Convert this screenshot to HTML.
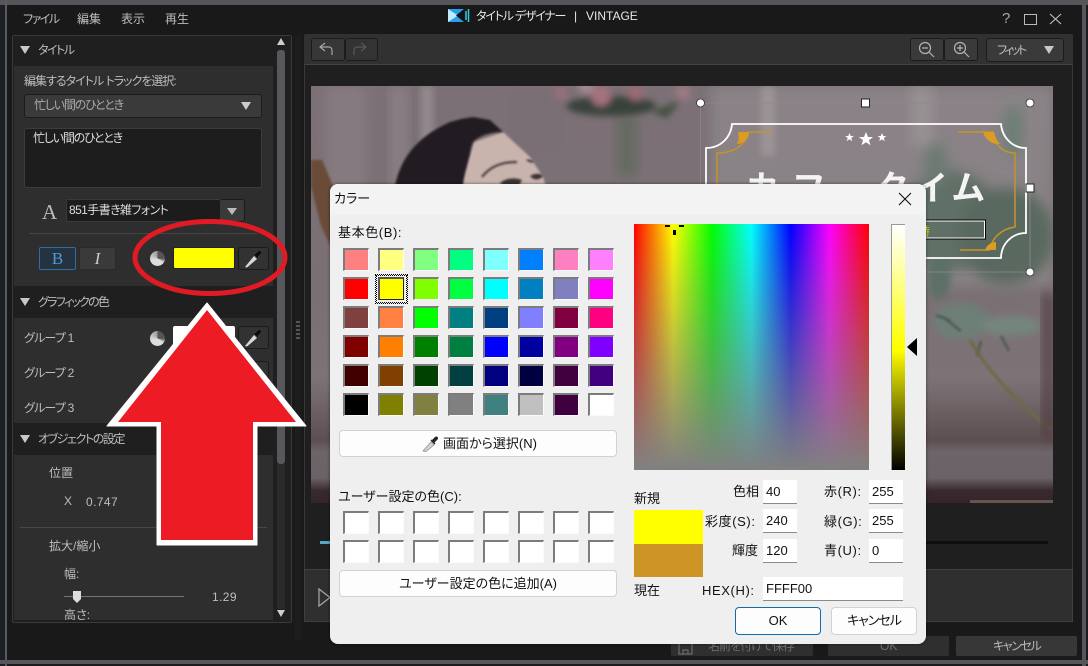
<!DOCTYPE html>
<html lang="ja"><head><meta charset="utf-8"><title>カラー</title>
<style>
*{box-sizing:border-box;margin:0;padding:0}
html,body{width:1088px;height:666px;overflow:hidden;background:#1b1b1d}
body{position:relative;font-family:"Liberation Sans","Noto Sans CJK JP",sans-serif;font-size:12px;color:#bdbdbd;font-feature-settings:"palt"}
.a{position:absolute}
.t{position:absolute;white-space:nowrap;line-height:16px}
.ct{position:absolute;left:14px;width:259px;background:#2e2e2e}
.tri{position:absolute;width:0;height:0;border-left:5px solid transparent;border-right:5px solid transparent;border-top:8px solid #c8c8c8}
.btn{position:absolute;background:#323232;border:1px solid #1b1b1b;border-radius:3px}
.d{position:absolute;color:#111;white-space:nowrap;line-height:16px;font-size:13px}
.sp{letter-spacing:.6px}
.sw{position:absolute;width:26px;height:23px;border-top:2px solid #7c7c7c;border-left:2px solid #7c7c7c;border-right:1px solid #fbfbfb;border-bottom:1px solid #fbfbfb}
.db{position:absolute;background:#fdfdfd;border:1px solid #d2d2d2;border-radius:4px;color:#111;font-size:13px;text-align:center;line-height:26px;white-space:nowrap}
.inp{position:absolute;background:#fff;border-bottom:1px solid #8a8a8a;color:#111;font-size:13px;line-height:23px;padding-left:3px;height:24px}
</style></head><body>
<!-- window frame -->
<div class="a" style="left:0;top:0;width:1088px;height:5px;background:#56565a"></div>
<div class="a" style="left:5px;top:0;width:2px;height:666px;background:#5a5a5e"></div>
<div class="a" style="left:0;top:5px;width:5px;height:661px;background:#1c2026"></div>
<div class="a" style="left:1082px;top:0;width:4px;height:666px;background:#56565a"></div>
<div class="a" style="left:0;top:660px;width:1088px;height:4px;background:#56565a"></div>
<div class="a" style="left:7px;top:5px;width:1075px;height:655px;background:#19191a"></div>

<!-- menu -->
<div class="t" style="left:23px;top:11px;letter-spacing:-1.500px">ファイル</div>
<div class="t" style="left:77px;top:11px">編集</div>
<div class="t" style="left:121px;top:11px">表示</div>
<div class="t" style="left:165px;top:11px">再生</div>

<!-- title -->
<svg class="a" style="left:447px;top:8px" width="26" height="16" viewBox="0 0 26 16"><rect x="1" y="1" width="16" height="13" fill="#2a9fe8"/><path d="M1 1L11 7.500 1 14z" fill="#bfeaff"/><path d="M17 1L9 7.500 17 14z" fill="#10131a"/><path d="M19 3v9M21.500 1v13" stroke="#35c8dc" stroke-width="1.500"/></svg>
<div class="t" style="left:476px;top:8px;color:#e8e8e8;letter-spacing:-1.200px">タイトル デザイナー</div>
<div class="t" style="left:574px;top:8px;color:#e8e8e8">|</div>
<div class="t" style="left:586px;top:8px;color:#e8e8e8">VINTAGE</div>
<div class="t" style="left:1002px;top:11px;font-size:15px;color:#aaa">?</div>
<div class="a" style="left:1024px;top:14px;width:13px;height:11px;border:1.500px solid #bbb"></div>
<svg class="a" style="left:1049px;top:13px" width="13" height="12"><path d="M1 1L12 11M12 1L1 11" stroke="#c0c0c0" stroke-width="1.100"/></svg>

<!-- left panel -->
<div class="a" style="left:12px;top:35px;width:280px;height:588px;background:#1f1f1f;border:1px solid #3a3a3a;border-radius:2px"></div>
<div class="a" style="left:277px;top:50px;width:8px;height:414px;background:#58585c;border-radius:3px"></div>
<div class="a" style="left:277px;top:464px;width:8px;height:145px;background:#2a2a2a"></div>
<div class="a" style="left:277px;top:38px;width:0;height:0;border-left:4px solid transparent;border-right:4px solid transparent;border-bottom:7px solid #cfcfcf"></div>
<div class="a" style="left:277px;top:610px;width:0;height:0;border-left:4px solid transparent;border-right:4px solid transparent;border-top:7px solid #cfcfcf"></div>

<div class="tri" style="left:20px;top:46px"></div>
<div class="t" style="left:38px;top:42px;letter-spacing:-1.500px">タイトル</div>
<div class="ct" style="top:66px;height:220px"></div>
<div class="t" style="left:24px;top:73px;letter-spacing:-1px">編集するタイトル トラックを選択:</div>
<div class="btn" style="left:24px;top:94px;width:238px;height:24px;background:#3a3a3a"></div>
<div class="t" style="left:34px;top:97px;color:#aaa;letter-spacing:-1.200px">忙しい間のひととき</div>
<div class="tri" style="left:241px;top:102px;border-top-color:#ccc"></div>
<div class="a" style="left:24px;top:128px;width:238px;height:60px;background:#1d1d1d;border:1px solid #3c3c3c;border-radius:3px"></div>
<div class="t" style="left:33px;top:130px;color:#ddd;letter-spacing:-1.200px">忙しい間のひととき</div>
<div class="t" style="left:42px;top:202px;font-family:'Liberation Serif',serif;font-size:21px;line-height:20px;color:#bbb">A</div>
<div class="a" style="left:66px;top:199px;width:154px;height:23px;background:#1c1c1c;border:1px solid #3a3a3a"></div>
<div class="btn" style="left:219px;top:199px;width:26px;height:23px;background:#3a3a3a"></div>
<div class="tri" style="left:227px;top:208px;border-top-color:#bbb;border-top-width:7px"></div>
<div class="t" style="left:69px;top:202px;color:#ddd;letter-spacing:-.6px">851手書き雑フォント</div>
<div class="a" style="left:29px;top:233px;width:228px;height:1px;background:#444"></div>
<div class="a" style="left:39px;top:247px;width:37px;height:23px;background:#25323f;border:1px solid #2c6da8;border-radius:2px;color:#4f9ad8;font:17px/21px 'Liberation Serif',serif;text-align:center">B</div>
<div class="a" style="left:79px;top:247px;width:37px;height:23px;background:#3a3a3a;border:1px solid #2a2a2a;border-radius:2px;color:#ccc;font:italic 17px/21px 'Liberation Serif',serif;text-align:center">I</div>
<div class="a" style="left:150px;top:251px;width:15px;height:15px;border-radius:50%;background:conic-gradient(#555 0 25%,#ddd 35% 70%,#999 100%)"></div>
<div class="a" style="left:173px;top:247px;width:62px;height:22px;background:#ff0;border:1px solid #222;border-radius:2px"></div>
<div class="btn" style="left:238px;top:247px;width:31px;height:23px"></div>
<svg class="a" style="left:243px;top:248px" width="22" height="21" viewBox="0 0 22 21"><path d="M2 19L11 8l3 3L4 19.500z" fill="#d8d8d8"/><path d="M12 6l3-3c2-2 5 1 3 3l-3 3 1 1-1 1-5-5 1-1z" fill="#0c0c0c" stroke="#555" stroke-width=".5"/></svg>

<div class="tri" style="left:20px;top:298px"></div>
<div class="t" style="left:38px;top:294px;letter-spacing:-1.750px">グラフィックの色</div>
<div class="ct" style="top:318px;height:105px"></div>
<div class="t" style="left:24px;top:330px;letter-spacing:-.8px">グループ 1</div>
<div class="t" style="left:24px;top:365px;letter-spacing:-.8px">グループ 2</div>
<div class="t" style="left:24px;top:400px;letter-spacing:-.8px">グループ 3</div>
<div class="a" style="left:150px;top:331px;width:15px;height:15px;border-radius:50%;background:conic-gradient(#555 0 25%,#ddd 35% 70%,#999 100%)"></div>
<div class="a" style="left:173px;top:326px;width:62px;height:22px;background:#fff;border-radius:2px"></div>
<div class="btn" style="left:238px;top:326px;width:31px;height:23px"></div>
<svg class="a" style="left:243px;top:327px" width="22" height="21" viewBox="0 0 22 21"><path d="M2 19L11 8l3 3L4 19.500z" fill="#d8d8d8"/><path d="M12 6l3-3c2-2 5 1 3 3l-3 3 1 1-1 1-5-5 1-1z" fill="#0c0c0c" stroke="#555" stroke-width=".5"/></svg>
<div class="btn" style="left:238px;top:361px;width:31px;height:23px"></div>

<div class="tri" style="left:20px;top:435px"></div>
<div class="t" style="left:38px;top:431px;letter-spacing:-1.400px">オブジェクトの設定</div>
<div class="ct" style="top:455px;height:165px"></div>
<div class="t" style="left:49px;top:465px">位置</div>
<div class="t" style="left:64px;top:493px">X</div>
<div class="t" style="left:86px;top:494px;letter-spacing:.4px">0.747</div>
<div class="a" style="left:20px;top:527px;width:247px;height:1px;background:#484848"></div>
<div class="t" style="left:49px;top:538px">拡大/縮小</div>
<div class="t" style="left:64px;top:566px">幅:</div>
<div class="a" style="left:64px;top:596px;width:120px;height:1px;background:#777"></div>
<svg class="a" style="left:72px;top:591px" width="10" height="13"><path d="M1 0h8v8l-4 4-4-4z" fill="#ddd"/></svg>
<div class="t" style="left:212px;top:589px;letter-spacing:.4px">1.29</div>
<div class="a" style="left:14px;top:608px;width:259px;height:12px;overflow:hidden"><div class="t" style="left:50px;top:-1px">高さ:</div></div>

<!-- splitter -->
<div class="a" style="left:295px;top:35px;width:6px;height:605px;background:#1d1d1e"></div>
<div class="a" style="left:296px;top:321px;width:4px;height:18px;background:repeating-linear-gradient(#555 0 2px,transparent 2px 4px)"></div>

<!-- right panel -->
<div class="a" style="left:304px;top:34px;width:769px;height:588px;background:#1f1f1f;border:1px solid #383838;border-radius:2px"></div>
<div class="a" style="left:304px;top:34px;width:769px;height:31px;background:#313131;border-radius:2px;border-bottom:1px solid #444"></div>
<div class="btn" style="left:311px;top:38px;width:34px;height:23px;background:#373737"></div>
<div class="btn" style="left:345px;top:38px;width:33px;height:23px;background:#333"></div>
<svg class="a" style="left:319px;top:42px" width="52" height="16" fill="none"><path d="M13 13V8a3 3 0 0 0-3-3H2M6 1L1 5l5 4" stroke="#a5a5a5" stroke-width="1.200"/><path d="M35 13V8a3 3 0 0 1 3-3h8M42 1l5 4-5 4" stroke="#585858" stroke-width="1.200"/></svg>
<div class="btn" style="left:910px;top:38px;width:34px;height:23px;background:#3a3a3a"></div>
<div class="btn" style="left:944px;top:38px;width:34px;height:23px;background:#3a3a3a"></div>
<svg class="a" style="left:917px;top:41px" width="56" height="18" fill="none" stroke="#b5b5b5" stroke-width="1.200"><circle cx="8" cy="7" r="5.500"/><path d="M5 7h6M12 11l5 5"/><circle cx="43" cy="7" r="5.500"/><path d="M40 7h6M43 4v6M47 11l5 5"/></svg>
<div class="btn" style="left:986px;top:38px;width:78px;height:24px;background:#3a3a3a"></div>
<div class="t" style="left:997px;top:42px;letter-spacing:-2.500px">フィット</div>
<div class="tri" style="left:1044px;top:46px"></div>

<!-- photo -->
<svg class="a" style="left:311px;top:86px" width="742" height="417" viewBox="0 0 742 417">
<defs>
<filter id="b" x="-30%" y="-30%" width="160%" height="160%"><feGaussianBlur stdDeviation="6"/></filter>
<filter id="b2" x="-30%" y="-30%" width="160%" height="160%"><feGaussianBlur stdDeviation="3.500"/></filter>
<filter id="b3" x="-30%" y="-30%" width="160%" height="160%"><feGaussianBlur stdDeviation="1"/></filter>
<linearGradient id="bg" x1="0" y1="0" x2="0" y2="1"><stop offset="0" stop-color="#7c7077"/><stop offset=".5" stop-color="#7a7074"/><stop offset=".7" stop-color="#7d7377"/><stop offset=".85" stop-color="#5d4f51"/><stop offset=".875" stop-color="#6c6468"/><stop offset=".94" stop-color="#6a6266"/><stop offset=".97" stop-color="#3a2a30"/><stop offset="1" stop-color="#33242a"/></linearGradient>
</defs>
<rect width="742" height="417" fill="url(#bg)"/>
<rect x="400" y="0" width="342" height="200" fill="#908b8d" opacity=".7" filter="url(#b)"/>
<rect x="80" y="0" width="16" height="110" fill="#8a8085" filter="url(#b)"/>
<rect x="110" y="0" width="12" height="90" fill="#938a8e" filter="url(#b2)"/>
<rect x="15" y="0" width="40" height="120" fill="#857a80" filter="url(#b)"/>
<rect x="195" y="0" width="60" height="70" fill="#7a6e74" filter="url(#b)"/>
<g filter="url(#b)">
<rect x="306" y="30" width="20" height="60" fill="#646a5e"/>
</g>
<g filter="url(#b2)">
<ellipse cx="300" cy="20" rx="45" ry="10" fill="#38423a"/>
<circle cx="250" cy="7" r="7" fill="#96707a"/><circle cx="290" cy="10" r="10" fill="#a4727e"/><circle cx="325" cy="7" r="8" fill="#9a6a74"/><circle cx="372" cy="7" r="8" fill="#9a7a80"/><circle cx="275" cy="0" r="8" fill="#a08a8e"/>
<path d="M340 26q20-8 30-12l-14 18z" fill="#3f4f3c"/>
</g>
<rect x="600" y="0" width="22" height="60" fill="#a09b9e" filter="url(#b)" opacity=".6"/>
<rect x="450" y="0" width="14" height="70" fill="#a7a1a3" filter="url(#b2)" opacity=".6"/>
<!-- chair -->
<path d="M0 74H11L22 100V165L10 140L0 100z" fill="#6a4c38" filter="url(#b3)"/>
<!-- woman -->
<path d="M150 100L158 71L163 56L192 46L219 71L232 91L235 100z" fill="#c9b4ad" filter="url(#b3)"/>
<path d="M84 100C90 70 108 50 139 36L150 33L162 31L179 34L192 46C178 46 168 50 162 56C159 62 159 71 158 71C156 80 152 92 152 100z" fill="#211e20" filter="url(#b3)"/>
<path d="M171 91C178 82 188 76 206 76M216 74L222 76" stroke="#3a2e30" stroke-width="2" fill="none" filter="url(#b3)"/>
<path d="M189 97c6-5 15-6 22-3l-3 6h-16zM219 90c5-3 10-3 13 0-3 4-9 5-13 0z" fill="#3a3034" filter="url(#b3)"/>
<!-- plants right -->
<g filter="url(#b)">
<ellipse cx="702" cy="45" rx="10" ry="26" fill="#6c7f75"/>
<ellipse cx="640" cy="135" rx="50" ry="50" fill="#616f66"/>
<ellipse cx="695" cy="150" rx="48" ry="48" fill="#5a695f"/>
<ellipse cx="570" cy="165" rx="30" ry="30" fill="#646f67"/>
<ellipse cx="625" cy="80" rx="12" ry="22" fill="#6c7a72"/>
</g>
<g filter="url(#b2)">
<ellipse cx="650" cy="235" rx="28" ry="18" fill="#6d7f76" />
<ellipse cx="700" cy="240" rx="30" ry="10" fill="#74857c"/>
<ellipse cx="628" cy="190" rx="12" ry="24" fill="#5d6f66"/>
</g>
<path d="M640 235l-15-6M650 245l-18-14M670 255l-4 15M690 250l8 15" stroke="#525f58" stroke-width="3" filter="url(#b3)"/>
<path d="M659 254C680 290 710 320 741 344" stroke="#6d6a45" stroke-width="3" fill="none" filter="url(#b3)"/>
<path d="M732 207V354H742V207z" fill="#4f3a3f" filter="url(#b)"/>
<rect x="659" y="414" width="83" height="3" fill="#8e7368" opacity=".6"/>
</svg>

<!-- title graphics -->
<svg class="a" style="left:0;top:0" width="1088" height="300" viewBox="0 0 1088 300">
<path d="M700.500 103H1030V272H700.500z" fill="none" stroke="#8b8b8b" stroke-width=".8"/>
<path d="M732 124H1001c1 13 11 24 25 24V233c-14 0-25 11-25 25H732c0-14-11-25-26-25V148c15 0 25-11 26-24z" fill="none" stroke="#fff" stroke-width="1.800"/>
<path d="M773 132H748c-2 12-13 21-31 21V243M958 132h35c2 12 8 21 22 21V227c-14 2-22 10-26 23H960" fill="none" stroke="#c99225" stroke-width="1.500"/>
<path d="M738 132h11c0 6-3 11-12 12 2-4 2-8 1-12zM983 132h11c1 5 3 9 6 12-8 1-15-5-17-12zM985 250c2-5 6-8 11-8v8z" fill="#dc9c22"/>
<path d="M849.500 133l1.200 3h3.200l-2.600 2 1 3.200-2.800-1.900-2.800 1.900 1-3.200-2.600-2h3.200zM866 132l2 5h5l-4 3.200 1.500 5-4.500-3-4.500 3 1.500-5-4-3.200h5zM882 133l1.200 3h3.200l-2.600 2 1 3.200-2.800-1.900-2.800 1.900 1-3.200-2.600-2h3.200z" fill="#fff"/>
<rect x="700" y="220" width="285.500" height="19" fill="none" stroke="#000" stroke-width="1"/>
<rect x="701" y="221" width="283.500" height="17" fill="none" stroke="#fff" stroke-width="1"/>
<text x="919" y="235" font-size="11" fill="#d8d820" font-family="Liberation Sans,Noto Sans CJK JP,sans-serif">特</text>
<g font-family="Liberation Sans,Noto Sans CJK JP,sans-serif" font-size="34" fill="#f4f4f4" font-weight="700">
<text x="747" y="200">カ</text><text x="794" y="200">フ</text><text x="876" y="200">タ</text><text x="915" y="200">イ</text><text x="953" y="200">ム</text>
</g>
<circle cx="700.500" cy="103" r="4" fill="#fff" stroke="#333" stroke-width=".8"/>
<circle cx="1030" cy="103" r="4" fill="#fff" stroke="#333" stroke-width=".8"/>
<circle cx="1030" cy="272" r="4" fill="#fff" stroke="#333" stroke-width=".8"/>
<rect x="861.500" y="99" width="8" height="8" fill="#fff" stroke="#222"/>
<rect x="1026" y="184" width="8" height="8" fill="#fff" stroke="#222"/>
</svg>

<!-- timeline & controls -->
<div class="a" style="left:320px;top:541px;width:728px;height:3px;background:#0f0f0f"></div>
<div class="a" style="left:320px;top:541px;width:12px;height:3px;background:#5aa6c4"></div>
<div class="a" style="left:304px;top:569px;width:769px;height:53px;background:#2f2f2f;border:1px solid #404040"></div>
<svg class="a" style="left:318px;top:588px" width="14" height="20"><path d="M1 1l11 8.500L1 18z" fill="none" stroke="#aaa" stroke-width="1.200"/></svg>

<!-- bottom buttons -->
<div class="btn" style="left:670px;top:635px;width:144px;height:22px;background:#2f2f2f"></div>
<svg class="a" style="left:678px;top:642px" width="15" height="13" fill="none" stroke="#777"><path d="M1 1h13v11H1zM5 12V8h5v4"/></svg>
<div class="t" style="left:708px;top:638px;color:#6e6e6e;letter-spacing:-1px">名前を付けて保存</div>
<div class="btn" style="left:827px;top:635px;width:123px;height:22px;background:#2f2f2f"></div>
<div class="t" style="left:880px;top:638px;color:#6e6e6e">OK</div>
<div class="btn" style="left:955px;top:635px;width:123px;height:22px;background:#373737"></div>
<div class="t" style="left:993px;top:638px;color:#bbb;letter-spacing:-1.400px">キャンセル</div>

<!-- arrow & ellipse -->
<svg class="a" style="left:0;top:0" width="330" height="666" viewBox="0 0 330 666">
<ellipse cx="210" cy="257.500" rx="75" ry="36" fill="none" stroke="#e01b24" stroke-width="5"/>
<path d="M207 303L306 426H257V545H157V426H107z" fill="#fff" stroke="#fff" stroke-linejoin="round"/>
<path d="M207 310L296 422H253V540H161V422H118z" fill="#ed1c24"/>
</svg>

<!-- dialog -->
<div class="a" style="left:330px;top:184px;width:596px;height:460px;background:#efefef;border-radius:8px;box-shadow:0 0 3px rgba(0,0,0,.5)"></div>
<div class="a" style="left:330px;top:184px;width:596px;height:31px;background:#f3f3f3;border-radius:8px 8px 0 0"></div>
<div class="d" style="left:334px;top:191px">カラー</div>
<svg class="a" style="left:898px;top:192px" width="14" height="14"><path d="M1 1L13 13M13 1L1 13" stroke="#111" stroke-width="1.100"/></svg>
<div class="d sp" style="left:338px;top:225px">基本色(B):</div>

<div class="sw" style="left:343px;top:248px;background:#ff8080"></div><div class="sw" style="left:378px;top:248px;background:#ffff80"></div><div class="sw" style="left:413px;top:248px;background:#80ff80"></div><div class="sw" style="left:448px;top:248px;background:#00ff80"></div><div class="sw" style="left:483px;top:248px;background:#80ffff"></div><div class="sw" style="left:518px;top:248px;background:#0080ff"></div><div class="sw" style="left:553px;top:248px;background:#ff80c0"></div><div class="sw" style="left:588px;top:248px;background:#ff80ff"></div>
<div class="sw" style="left:343px;top:277px;background:#ff0000"></div><div class="a" style="left:375px;top:274px;width:33px;height:30px;border:1px dotted #000;outline:1px dotted #000;outline-offset:-2px"></div><div class="sw" style="left:378px;top:277px;background:#ffff00;border-color:#555 #222 #222 #555"></div><div class="sw" style="left:413px;top:277px;background:#80ff00"></div><div class="sw" style="left:448px;top:277px;background:#00ff40"></div><div class="sw" style="left:483px;top:277px;background:#00ffff"></div><div class="sw" style="left:518px;top:277px;background:#0080c0"></div><div class="sw" style="left:553px;top:277px;background:#8080c0"></div><div class="sw" style="left:588px;top:277px;background:#ff00ff"></div>
<div class="sw" style="left:343px;top:306px;background:#804040"></div><div class="sw" style="left:378px;top:306px;background:#ff8040"></div><div class="sw" style="left:413px;top:306px;background:#00ff00"></div><div class="sw" style="left:448px;top:306px;background:#008080"></div><div class="sw" style="left:483px;top:306px;background:#004080"></div><div class="sw" style="left:518px;top:306px;background:#8080ff"></div><div class="sw" style="left:553px;top:306px;background:#800040"></div><div class="sw" style="left:588px;top:306px;background:#ff0080"></div>
<div class="sw" style="left:343px;top:335px;background:#800000"></div><div class="sw" style="left:378px;top:335px;background:#ff8000"></div><div class="sw" style="left:413px;top:335px;background:#008000"></div><div class="sw" style="left:448px;top:335px;background:#008040"></div><div class="sw" style="left:483px;top:335px;background:#0000ff"></div><div class="sw" style="left:518px;top:335px;background:#0000a0"></div><div class="sw" style="left:553px;top:335px;background:#800080"></div><div class="sw" style="left:588px;top:335px;background:#8000ff"></div>
<div class="sw" style="left:343px;top:364px;background:#400000"></div><div class="sw" style="left:378px;top:364px;background:#804000"></div><div class="sw" style="left:413px;top:364px;background:#004000"></div><div class="sw" style="left:448px;top:364px;background:#004040"></div><div class="sw" style="left:483px;top:364px;background:#000080"></div><div class="sw" style="left:518px;top:364px;background:#000040"></div><div class="sw" style="left:553px;top:364px;background:#400040"></div><div class="sw" style="left:588px;top:364px;background:#400080"></div>
<div class="sw" style="left:343px;top:393px;background:#000000"></div><div class="sw" style="left:378px;top:393px;background:#808000"></div><div class="sw" style="left:413px;top:393px;background:#808040"></div><div class="sw" style="left:448px;top:393px;background:#808080"></div><div class="sw" style="left:483px;top:393px;background:#408080"></div><div class="sw" style="left:518px;top:393px;background:#c0c0c0"></div><div class="sw" style="left:553px;top:393px;background:#400040"></div><div class="sw" style="left:588px;top:393px;background:#ffffff"></div>

<div class="db" style="left:339px;top:430px;width:278px;height:27px;padding-left:24px">画面から選択(N)</div>
<svg class="a" style="left:422px;top:435px" width="18" height="17" viewBox="0 0 18 17"><path d="M1 16L9 7l3 3-8 6.500z" fill="#d5d5d5" stroke="#888" stroke-width=".7"/><path d="M10 5l3-3c2-1.500 4 .5 2.500 2.500l-3 3 1 1-1 1-4-4 1-1z" fill="#222"/></svg>
<div class="d" style="left:338px;top:489px">ユーザー設定の色(C):</div>

<div class="sw" style="left:343px;top:511px;background:#fff"></div><div class="sw" style="left:378px;top:511px;background:#fff"></div><div class="sw" style="left:413px;top:511px;background:#fff"></div><div class="sw" style="left:448px;top:511px;background:#fff"></div><div class="sw" style="left:483px;top:511px;background:#fff"></div><div class="sw" style="left:518px;top:511px;background:#fff"></div><div class="sw" style="left:553px;top:511px;background:#fff"></div><div class="sw" style="left:588px;top:511px;background:#fff"></div>
<div class="sw" style="left:343px;top:540px;background:#fff"></div><div class="sw" style="left:378px;top:540px;background:#fff"></div><div class="sw" style="left:413px;top:540px;background:#fff"></div><div class="sw" style="left:448px;top:540px;background:#fff"></div><div class="sw" style="left:483px;top:540px;background:#fff"></div><div class="sw" style="left:518px;top:540px;background:#fff"></div><div class="sw" style="left:553px;top:540px;background:#fff"></div><div class="sw" style="left:588px;top:540px;background:#fff"></div>

<div class="db" style="left:339px;top:570px;width:278px;height:27px">ユーザー設定の色に追加(A)</div>

<!-- spectrum -->
<div class="a" style="left:634px;top:224px;width:235px;height:246px;background:linear-gradient(to bottom,rgba(128,128,128,0),#808080),linear-gradient(to right,#f00,#ff0 16.700%,#0f0 33.300%,#0ff 50%,#00f 66.700%,#f0f 83.300%,#f00)"></div>
<div class="a" style="left:665px;top:225px;width:5px;height:2px;background:#000"></div>
<div class="a" style="left:679px;top:225px;width:5px;height:2px;background:#000"></div>
<div class="a" style="left:673px;top:230px;width:3px;height:5px;background:#000"></div>
<!-- luminance -->
<div class="a" style="left:891px;top:224px;width:14px;height:246px;border-top:1px solid #999;border-left:1px solid #999;background:linear-gradient(to bottom,#fff,#ffff00 50%,#ffff00 51%,#000)"></div>
<div class="a" style="left:907px;top:338px;width:0;height:0;border-top:9px solid transparent;border-bottom:9px solid transparent;border-right:10px solid #000"></div>

<!-- preview -->
<div class="d" style="left:634px;top:491px">新規</div>
<div class="a" style="left:634px;top:510px;width:69px;height:34px;background:#ff0"></div>
<div class="a" style="left:634px;top:544px;width:69px;height:33px;background:#cd9525"></div>
<div class="d" style="left:634px;top:583px">現在</div>

<div class="d" style="left:733px;top:484px">色相</div>
<div class="inp" style="left:763px;top:480px;width:34px">40</div>
<div class="d sp" style="left:705px;top:514px">彩度(S):</div>
<div class="inp" style="left:763px;top:509px;width:34px">240</div>
<div class="d" style="left:732px;top:543px">輝度</div>
<div class="inp" style="left:763px;top:539px;width:34px">120</div>
<div class="d sp" style="left:824px;top:484px">赤(R):</div>
<div class="inp" style="left:869px;top:480px;width:34px">255</div>
<div class="d sp" style="left:824px;top:514px">緑(G):</div>
<div class="inp" style="left:869px;top:509px;width:34px">255</div>
<div class="d sp" style="left:824px;top:543px">青(U):</div>
<div class="inp" style="left:869px;top:539px;width:34px">0</div>
<div class="d sp" style="left:702px;top:583px">HEX(H):</div>
<div class="inp" style="left:763px;top:577px;width:140px">FFFF00</div>

<div class="db" style="left:735px;top:607px;width:86px;height:28px;border:1.500px solid #0f6cae;background:#fdfdfd">OK</div>
<div class="db" style="left:831px;top:607px;width:86px;height:28px;letter-spacing:-1px">キャンセル</div>
</body></html>
